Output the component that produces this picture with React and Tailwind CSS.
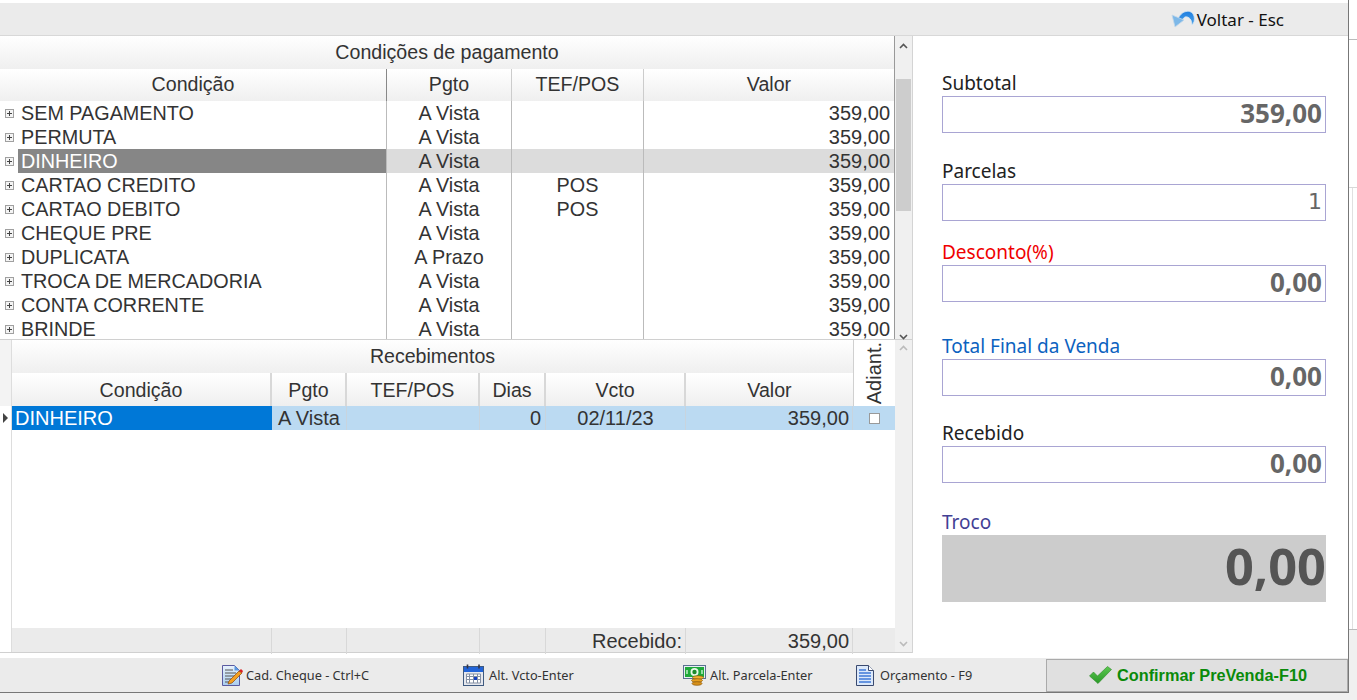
const sans = "font-['Liberation_Sans',Arial,sans-serif]";

const topRows = [
  ["SEM PAGAMENTO", "A Vista", ""],
  ["PERMUTA", "A Vista", ""],
  ["DINHEIRO", "A Vista", ""],
  ["CARTAO CREDITO", "A Vista", "POS"],
  ["CARTAO DEBITO", "A Vista", "POS"],
  ["CHEQUE PRE", "A Vista", ""],
  ["DUPLICATA", "A Prazo", ""],
  ["TROCA DE MERCADORIA", "A Vista", ""],
  ["CONTA CORRENTE", "A Vista", ""],
  ["BRINDE", "A Vista", ""],
];

function Plus() {
  return (
    <svg width="9" height="9" viewBox="0 0 9 9" className="shrink-0">
      <rect x="0.5" y="0.5" width="8" height="8" fill="#f4f4f4" stroke="#a0a0a0" />
      <path d="M2 4.5h5M4.5 2v5" stroke="#444" />
    </svg>
  );
}

function UndoIcon() {
  return (
    <svg width="24" height="20" viewBox="0 0 24 20">
      <defs>
        <linearGradient id="undoArc" x1="0" y1="0" x2="0" y2="1">
          <stop offset="0" stopColor="#1f7fe0" />
          <stop offset="1" stopColor="#4aa0e8" />
        </linearGradient>
      </defs>
      <path d="M7 10C10 2 20-1 23 7c1 4 0 7-2 9 0-5-3-9-7-8-2 1-3 3-3 5z" fill="url(#undoArc)" stroke="#d6e6f2" strokeWidth="0.8" />
      <path d="M1 6l3 12 9-7z" fill="#7db8e8" stroke="#c4d8e8" strokeWidth="0.8" strokeLinejoin="round" />
    </svg>
  );
}

function NoteIcon() {
  return (
    <svg width="22" height="23" viewBox="0 0 22 23">
      <defs>
        <linearGradient id="notePage" x1="0" y1="0" x2="0" y2="1">
          <stop offset="0" stopColor="#e8f2fc" />
          <stop offset="1" stopColor="#a9cdf0" />
        </linearGradient>
      </defs>
      <path d="M1.5 1.5h12l5 5v15h-17z" fill="url(#notePage)" stroke="#5a5aa0" />
      <path d="M13.5 1.5l5 5h-5z" fill="#5a98e0" />
      <path d="M4 6h8M4 9h11M4 12h10M4 15h7M4 18h4" stroke="#555" />
      <path d="M8 17l10-10 3 2-10 10-4 1z" fill="#f5a020" stroke="#8a4a10" strokeWidth="0.7" />
      <path d="M18 7l2-2 2 2-1 2z" fill="#d82020" />
    </svg>
  );
}

function CalendarIcon() {
  return (
    <svg width="22" height="22" viewBox="0 0 22 22">
      <rect x="0.5" y="2.5" width="20" height="19" fill="#e6e8ee" stroke="#3f5a80" />
      <rect x="1" y="3" width="19" height="5" fill="#2264d8" />
      <path d="M3.5 10v9h14v-9zM3 12.500h15M3 15.500h15M6.500 10v9M10.500 10v9M14.500 10v9" fill="#fff" stroke="#8490a4" />
      <rect x="11" y="13" width="3" height="3" fill="#1540c0" />
      <path d="M4.500 0.500v4M16 0.500v4" stroke="#334" strokeWidth="1.6" />
    </svg>
  );
}

function MoneyIcon() {
  return (
    <svg width="24" height="21" viewBox="0 0 24 21">
      <rect x="0.5" y="0.5" width="22" height="13" fill="#e8eef4" stroke="#5a7090" />
      <rect x="2" y="2" width="19" height="10" fill="#1ea83a" />
      <circle cx="11.500" cy="7" r="4" fill="#e8f8e8" />
      <circle cx="11.500" cy="7" r="2.200" fill="#1c8a2c" />
      <path d="M4 5v4M19 5v4" stroke="#bfeec8" strokeWidth="1.500" />
      <ellipse cx="15" cy="12.500" rx="5.500" ry="1.800" fill="#f0b030" stroke="#8a5a10" strokeWidth="0.7" />
      <ellipse cx="14" cy="15.500" rx="5.500" ry="1.800" fill="#e8a020" stroke="#8a5a10" strokeWidth="0.7" />
      <ellipse cx="14" cy="18.500" rx="5" ry="1.800" fill="#d89018" stroke="#8a5a10" strokeWidth="0.7" />
    </svg>
  );
}

function DocIcon() {
  return (
    <svg width="20" height="23" viewBox="0 0 20 23">
      <path d="M1.5 1.5h12l5 5v15h-17z" fill="#dbe8fa" stroke="#3a4a70" />
      <path d="M13.5 1.5v5h5" fill="#fff" stroke="#3a4a70" />
      <path d="M4 6h7M4 9h12M4 12h12M4 15h12M4 18h12" stroke="#3f78d8" strokeWidth="1.4" />
    </svg>
  );
}

function CheckIcon() {
  return (
    <svg width="23" height="18" viewBox="0 0 23 18">
      <defs>
        <linearGradient id="checkFill" x1="0" y1="0" x2="0" y2="1">
          <stop offset="0" stopColor="#5cc850" />
          <stop offset="1" stopColor="#2a9a28" />
        </linearGradient>
      </defs>
      <path d="M0.500 10l4-4 4 4L18.500 0.500l4 3L9 17.500z" fill="url(#checkFill)" stroke="#2b8a26" strokeWidth="0.6" strokeLinejoin="round" />
    </svg>
  );
}

function Field({
  label,
  value,
  labelClass = "text-[#222]",
  valueClass = "font-['Noto_Sans',sans-serif] text-[26px] font-bold text-[#666]",
  gap,
}) {
  return (
    <div className={gap}>
      <div className={`font-['Noto_Sans',sans-serif] text-[19px] leading-[25px] ${labelClass}`}>{label}</div>
      <div className={`flex h-[37px] items-center justify-end border border-[#a9a5d3] pr-[3px] pb-[3px] ${valueClass}`}>
        {value}
      </div>
    </div>
  );
}

function ToolItem({ icon, text, className }) {
  return (
    <div className={`flex items-center font-['Noto_Sans',sans-serif] text-[12.75px] text-[#333] ${className}`}>
      {icon}
      <span className="pt-[1px]">{text}</span>
    </div>
  );
}

export default function App() {
  return (
    <div className={`flex h-[700px] w-[1357px] overflow-hidden bg-[#f0f0f0] ${sans} text-[#333]`}>
      <div className="flex h-[693px] w-[1349px] shrink-0 flex-col border-r border-b border-[#777] bg-white">
        {/* Top bar */}
        <div className="mt-[3px] flex h-[33px] shrink-0 items-center justify-end border-b border-[#d8d8d8] bg-[#ebebeb] pr-[64px]">
          <div className="flex items-center gap-[2px] font-['Noto_Sans',sans-serif] text-[17px] text-[#111]">
            <UndoIcon />
            <span className="pt-[2px]">Voltar - Esc</span>
          </div>
        </div>

        <div className="flex h-[617px] shrink-0">
          {/* Left grids */}
          <div className="flex w-[913px] shrink-0 flex-col border-r border-[#d4d4d4]">
            {/* Condições */}
            <div className="flex h-[304px] shrink-0 border-b border-[#d0d0d0]">
              <div className="w-[895px] shrink-0 overflow-hidden border-r border-[#999] text-[19.8px]">
                <div className="flex h-[33px] items-center justify-center bg-gradient-to-b from-white to-[#efefef] text-[19.6px]">
                  Condições de pagamento
                </div>
                <div className="grid h-[32px] grid-cols-[387px_125px_132px_250px] items-center bg-gradient-to-b from-white to-[#efefef] text-center text-[19.6px]">
                  <div className="flex h-full items-center justify-center border-r border-[#888]">Condição</div>
                  <div className="flex h-full items-center justify-center border-r border-[#ccc]">Pgto</div>
                  <div className="flex h-full items-center justify-center border-r border-[#ccc]">TEF/POS</div>
                  <div className="flex h-full items-center justify-center">Valor</div>
                </div>
                {topRows.map((row) => {
                  const selected = row[0] === "DINHEIRO";
                  return (
                    <div key={row[0]} className={`grid h-[24px] grid-cols-[387px_125px_132px_250px] leading-[24px] ${selected ? "bg-[#dcdcdc]" : ""}`}>
                      <div className="flex items-center border-r border-[#bbb] bg-white">
                        <div className="flex w-[18px] shrink-0 justify-center pl-[1px]">
                          <Plus />
                        </div>
                        <div className={`h-full flex-1 pl-[3px] ${selected ? "bg-[#868686] text-white" : ""}`}>{row[0]}</div>
                      </div>
                      <div className="border-r border-[#bbb] text-center">{row[1]}</div>
                      <div className="border-r border-[#bbb] text-center">{row[2]}</div>
                      <div className="pr-[4px] text-right text-[20px]">359,00</div>
                    </div>
                  );
                })}
              </div>
              <div className="relative w-[17px] shrink-0 bg-[#f0f0f0]">
                <svg width="9" height="6" viewBox="0 0 9 6" className="absolute left-[4px] top-[7px]">
                  <path d="M1 5l3.5-3.5L8 5" fill="none" stroke="#555" strokeWidth="1.6" />
                </svg>
                <div className="absolute left-[1px] top-[43px] h-[132px] w-[15px] bg-[#cdcdcd]" />
                <svg width="9" height="6" viewBox="0 0 9 6" className="absolute left-[4px] top-[298px]">
                  <path d="M1 1l3.5 3.5L8 1" fill="none" stroke="#555" strokeWidth="1.6" />
                </svg>
              </div>
            </div>

            {/* Recebimentos */}
            <div className="flex min-h-0 flex-1 border-b border-[#d0d0d0]">
              <div className="flex w-[12px] shrink-0 flex-col border-r border-[#ddd]">
                <div className="h-[66px] shrink-0 bg-[#f3f3f3]" />
                <div className="flex h-[24px] items-center justify-center pr-[1px]">
                  <svg width="6" height="10" viewBox="0 0 6 10">
                    <path d="M1 0l5 5-5 5z" fill="#444" />
                  </svg>
                </div>
              </div>
              <div className="flex w-[883px] shrink-0 flex-col text-[20px]">
                <div className="flex h-[66px] shrink-0 text-[19.6px]">
                  <div className="w-[841px] shrink-0">
                    <div className="flex h-[33px] items-center justify-center bg-gradient-to-b from-white to-[#efefef]">
                      Recebimentos
                    </div>
                    <div className="grid h-[33px] grid-cols-[260px_75px_133px_66px_140px_167px] bg-gradient-to-b from-white to-[#efefef] leading-[34px]">
                      <div className="border-r-2 border-[#d8d8d8] text-center">Condição</div>
                      <div className="border-r-2 border-[#d8d8d8] text-center">Pgto</div>
                      <div className="border-r-2 border-[#d8d8d8] text-center">TEF/POS</div>
                      <div className="border-r-2 border-[#d8d8d8] text-center">Dias</div>
                      <div className="border-r-2 border-[#d8d8d8] text-center">Vcto</div>
                      <div className="text-center">Valor</div>
                    </div>
                  </div>
                  <div className="flex w-[42px] items-center justify-center border-l border-[#d0d0d0] pr-[1px]">
                    <span className="rotate-180 text-[20px] leading-none [writing-mode:vertical-rl]">Adiant.</span>
                  </div>
                </div>
                <div className="grid h-[24px] shrink-0 grid-cols-[260px_75px_133px_66px_140px_167px_42px] bg-[#bbdaf2] leading-[24px]">
                  <div className="bg-[#0078d7] pl-[3px] text-white">DINHEIRO</div>
                  <div className="border-r border-[#c8d4de] text-center">A Vista</div>
                  <div className="border-r border-[#c8d4de]" />
                  <div className="border-r border-[#c8d4de] pr-[4px] text-right">0</div>
                  <div className="border-r border-[#c8d4de] text-center">02/11/23</div>
                  <div className="border-r border-[#c8d4de] pr-[3px] text-right">359,00</div>
                  <div className="flex items-center justify-center">
                    <div className="h-[11px] w-[11px] border border-[#999] bg-white" />
                  </div>
                </div>
                <div className="min-h-0 flex-1" />
                <div className="grid h-[24px] shrink-0 grid-cols-[260px_75px_133px_66px_140px_167px_42px] bg-[#ebebeb] leading-[26px]">
                  <div className="border-r border-[#d8d8d8]" />
                  <div className="border-r border-[#d8d8d8]" />
                  <div className="border-r border-[#d8d8d8]" />
                  <div className="border-r border-[#d8d8d8]" />
                  <div className="border-r border-[#d8d8d8] pr-[3px] text-right">Recebido:</div>
                  <div className="border-r border-[#d8d8d8] pr-[3px] text-right">359,00</div>
                  <div />
                </div>
              </div>
              <div className="relative w-[17px] shrink-0 bg-[#f0f0f0]">
                <svg width="9" height="6" viewBox="0 0 9 6" className="absolute left-[4px] top-[5px]">
                  <path d="M1 5l3.5-3.5L8 5" fill="none" stroke="#bbb" strokeWidth="1.6" />
                </svg>
                <svg width="9" height="6" viewBox="0 0 9 6" className="absolute bottom-[5px] left-[4px]">
                  <path d="M1 1l3.5 3.5L8 1" fill="none" stroke="#bbb" strokeWidth="1.6" />
                </svg>
              </div>
            </div>
          </div>

          {/* Right totals */}
          <div className="min-w-0 flex-1 pt-[35px] pr-[22px] pl-[29px]">
            <Field label="Subtotal" value="359,00" />
            <Field label="Parcelas" value="1" valueClass="font-['DejaVu_Sans',sans-serif] text-[22px] text-[#666]" gap="mt-[26px]" />
            <Field label="Desconto(%)" value="0,00" labelClass="text-[#f00000]" gap="mt-[19px]" />
            <Field label="Total Final da Venda" value="0,00" labelClass="text-[#0b62c0]" gap="mt-[32px]" />
            <Field label="Recebido" value="0,00" gap="mt-[25px]" />
            <div className="mt-[27px]">
              <div className="font-['Noto_Sans',sans-serif] text-[19px] leading-[25px] text-[#433f95]">Troco</div>
              <div className="flex h-[67px] items-center justify-end bg-[#cccccc] pb-[6px] font-['Noto_Sans',sans-serif] text-[50.5px] font-bold text-[#555]">
                0,00
              </div>
            </div>
          </div>
        </div>

        {/* Bottom bar */}
        <div className="mt-[5px] flex min-h-0 flex-1 items-center bg-[#ebebeb]">
          <ToolItem icon={<NoteIcon />} text="Cad. Cheque - Ctrl+C" className="ml-[221px] w-[242px] gap-[3px]" />
          <ToolItem icon={<CalendarIcon />} text="Alt. Vcto-Enter" className="w-[220px] gap-[4px]" />
          <ToolItem icon={<MoneyIcon />} text="Alt. Parcela-Enter" className="w-[172px] gap-[3px]" />
          <ToolItem icon={<DocIcon />} text="Orçamento - F9" className="w-[191px] gap-[5px]" />
          <div className="flex h-[33px] w-[302px] items-center justify-center gap-[5px] border border-[#aaa] bg-[#e0e0e0] pl-[2px] text-[16.3px] font-bold text-[#0a8a0a]">
            <CheckIcon />
            <span>Confirmar PreVenda-F10</span>
          </div>
        </div>
      </div>

      {/* Sliver of the window behind */}
      <div className="flex h-full flex-1 flex-col">
        <div className="h-[188px] shrink-0 border-b border-[#d8d8d8] bg-white pt-[39px]">
          <div className="border-t border-[#bbb]" />
        </div>
        <div className="h-[442px] shrink-0 border-b border-[#bbb] bg-white pl-[3px]">
          <div className="h-full border-l border-[#e0e0e0]" />
        </div>
      </div>
    </div>
  );
}
